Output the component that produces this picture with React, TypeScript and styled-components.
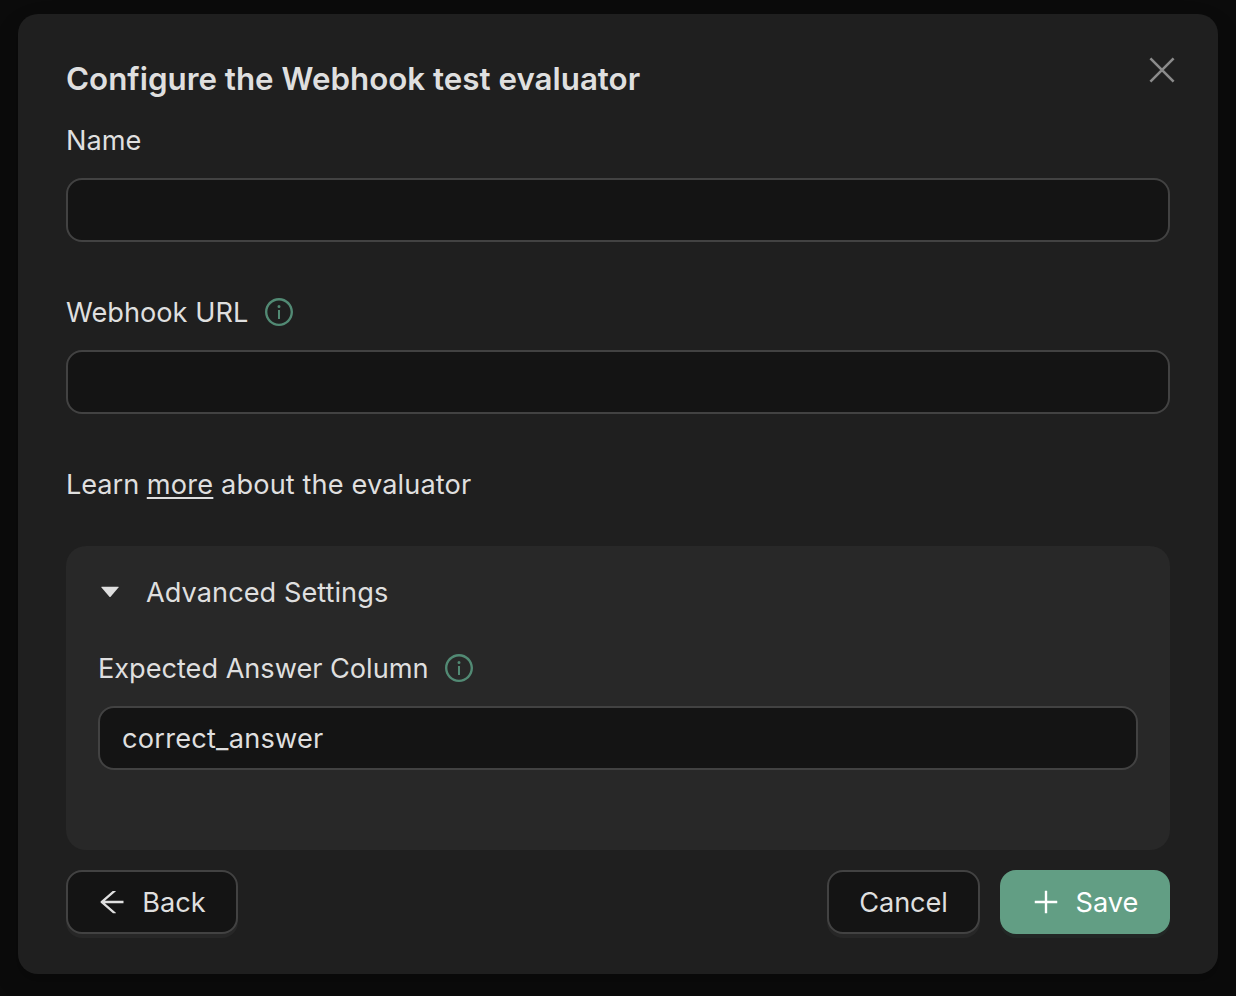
import React from "react";
import styled, { createGlobalStyle } from "styled-components";
import { AiOutlineArrowLeft, AiOutlineInfoCircle, AiOutlinePlus } from "react-icons/ai";

const GlobalStyle = createGlobalStyle`
  * { box-sizing: border-box; }
  body {
    margin: 0;
    background: #0c0c0c;
    color: #dfdfdf;
    font-family: Inter, "Liberation Sans", sans-serif;
    font-size: 27.2px;
    line-height: 44px;
    overflow: hidden;
  }
`;

const Backdrop = styled.div`
  padding: 14px 18px 22px;
  height: 996px;
`;

const Dialog = styled.section`
  height: 960px;
  padding: 40px 48px;
  border-radius: 20px;
  background: #1f1f1f;
  box-shadow: 0 12px 32px rgba(0, 0, 0, 0.08), 0 6px 12px -8px rgba(0, 0, 0, 0.12),
    0 18px 56px 16px rgba(0, 0, 0, 0.05);
`;

const Header = styled.header`
  display: flex;
  justify-content: space-between;
  height: 64px;
`;

const Title = styled.h1`
  margin: 0;
  font-size: 31.35px;
  font-weight: 600;
  line-height: 50px;
  letter-spacing: -0.01px;
  white-space: nowrap;
`;

const CloseButton = styled.button`
  display: flex;
  width: 32px;
  height: 32px;
  margin-right: -8px;
  padding: 0;
  border: 0;
  background: none;
  color: #8b8b8b;
`;

const Field = styled.div<{ $last?: boolean }>`
  display: flex;
  flex-direction: column;
  gap: 16px;
  margin-bottom: ${(p) => (p.$last ? 0 : 48)}px;
`;

const Label = styled.label`
  display: flex;
  align-items: center;
  gap: 15px;
  height: 44px;
`;

const Text = styled.span<{ $spacing?: number }>`
  padding-top: 2px;
  white-space: pre;
  letter-spacing: ${(p) => p.$spacing ?? 0}px;
`;

const InfoIcon = styled(AiOutlineInfoCircle)`
  color: #528a74;
`;

const Input = styled.input`
  width: 100%;
  height: 64px;
  padding: 0 22px;
  border: 2px solid #424242;
  border-radius: 16px;
  outline: 0;
  background: #141414;
  color: inherit;
  font: inherit;
  letter-spacing: 0.22px;
`;

const Hint = styled.p`
  margin: 0 0 38px;
  line-height: 46px;
  white-space: nowrap;
`;

const Link = styled.a`
  color: inherit;
  letter-spacing: 0.2px;
  text-decoration: underline;
  text-decoration-thickness: 2px;
  text-underline-offset: 3px;
  text-decoration-skip-ink: none;
`;

const Panel = styled.div`
  height: 304px;
  padding: 24px 32px;
  border-radius: 20px;
  background: #282828;
`;

const PanelHeader = styled.div`
  display: flex;
  align-items: center;
  gap: 24px;
  height: 44px;
  margin-bottom: 32px;
`;

const Footer = styled.footer`
  display: flex;
  gap: 20px;
  margin-top: 20px;
`;

const Button = styled.button<{ $width: number; $primary?: boolean; $icon?: boolean }>`
  display: flex;
  align-items: center;
  justify-content: center;
  gap: 14px;
  width: ${(p) => p.$width}px;
  height: 64px;
  padding: 0 ${(p) => (p.$icon ? 2 : 0)}px 0 0;
  border: ${(p) => (p.$primary ? "0" : "2px solid #424242")};
  border-radius: 16px;
  background: ${(p) => (p.$primary ? "#629e84" : "#141414")};
  color: ${(p) => (p.$primary ? "#fff" : "inherit")};
  box-shadow: 0 4px 0 ${(p) => (p.$primary ? "#222725" : "#272727")};
  font: inherit;
`;

const Spacer = styled.div`
  flex: 1;
`;

export default function App() {
  return (
    <Backdrop>
      <GlobalStyle />
      <Dialog>
        <Header>
          <Title>Configure the Webhook test evaluator</Title>
          <CloseButton aria-label="Close">
            <svg width="32" height="32" viewBox="0 0 32 32" fill="none" stroke="currentColor" strokeWidth="2.6">
              <path d="M4.4 4.4 27.6 27.6M27.6 4.4 4.4 27.6" />
            </svg>
          </CloseButton>
        </Header>
        <Field>
          <Label><Text>Name</Text></Label>
          <Input />
        </Field>
        <Field>
          <Label><Text>Webhook URL</Text><InfoIcon size={32} /></Label>
          <Input />
        </Field>
        <Hint>
          <Text $spacing={-0.06}>Learn </Text>
          <Link href="#">more</Link>
          <Text $spacing={0.11}> about the evaluator</Text>
        </Hint>
        <Panel>
          <PanelHeader>
            <svg width="24" height="24" viewBox="0 0 24 24" fill="currentColor">
              <path d="M3.7 6.8H20.3Q21 6.8 20.5 7.5L12.6 16.8Q12 17.3 11.4 16.8L3.5 7.5Q3 6.8 3.7 6.8Z" />
            </svg>
            <Text $spacing={0.03}>Advanced Settings</Text>
          </PanelHeader>
          <Field $last>
            <Label><Text $spacing={-0.04}>Expected Answer Column</Text><InfoIcon size={32} /></Label>
            <Input defaultValue="correct_answer" />
          </Field>
        </Panel>
        <Footer>
          <Button $width={172} $icon><AiOutlineArrowLeft size={32} /><Text>Back</Text></Button>
          <Spacer />
          <Button $width={153}><Text $spacing={-0.1}>Cancel</Text></Button>
          <Button $width={170} $primary $icon><AiOutlinePlus size={32} /><Text>Save</Text></Button>
        </Footer>
      </Dialog>
    </Backdrop>
  );
}
